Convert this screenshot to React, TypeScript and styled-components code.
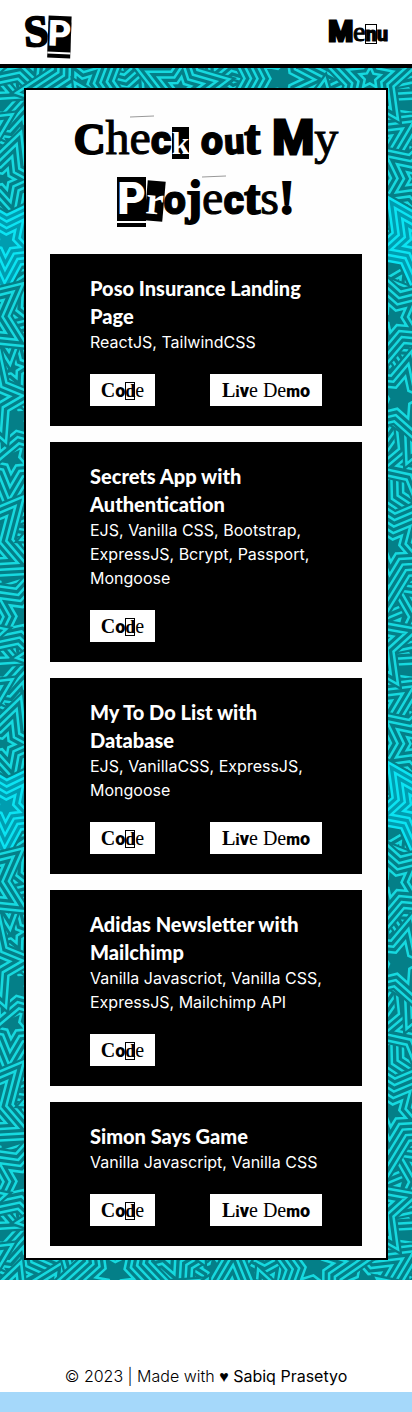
import React from "react";
import styled, { createGlobalStyle, css } from "styled-components";

const GlobalStyle = createGlobalStyle`
  *, *::before, *::after { box-sizing: border-box; }
  body {
    margin: 0;
    background: #a5d8fa;
    color: #000;
    font-family: Inter, sans-serif;
    font-size: 16px;
    line-height: 24px;
  }
  h1, h2, p { margin: 0; }
`;

/* ---------- ransom-note lettering ---------- */

type Face = "serif" | "slab" | "black" | "heavy";
type Glyph = {
  ch: string;
  size: number;
  face: Face;
  cut?: boolean;
  boxed?: boolean;
  underline?: boolean;
  tilt?: number;
  scratch?: boolean;
};

const faces = {
  serif: css`font-family: "Liberation Serif", serif; font-weight: 400; -webkit-text-stroke: 1px currentColor;`,
  slab: css`font-family: "Liberation Serif", serif; font-weight: 700; -webkit-text-stroke: 2px currentColor;`,
  black: css`font-family: Roboto, sans-serif; font-weight: 900; -webkit-text-stroke: 1px currentColor;`,
  heavy: css`font-family: Roboto, sans-serif; font-weight: 700; -webkit-text-stroke: 3px currentColor;`,
};

const Letter = styled.span<{
  $size: number;
  $face: Face;
  $cut?: boolean;
  $boxed?: boolean;
  $underline?: boolean;
  $tilt?: number;
  $scratch?: boolean;
}>`
  position: relative;
  display: inline-block;
  font-size: ${(p) => p.$size}px;
  line-height: 1;
  ${(p) => faces[p.$face]}
  ${(p) => p.$tilt && css`transform: rotate(${p.$tilt}deg);`}
  ${(p) => p.$cut && css`background: #000; color: #fff; -webkit-text-stroke-width: 0;`}
  ${(p) => p.$boxed && css`outline: 1px solid #000; outline-offset: -1px;`}
  ${(p) => p.$underline && css`box-shadow: 0 2px 0 #fff, 0 6px 0 #000;`}
  ${(p) =>
    p.$scratch &&
    css`
      &::before {
        content: "";
        position: absolute;
        top: 2px;
        left: 0;
        width: 24px;
        height: 1px;
        background: #999;
        transform: rotate(-2deg);
      }
    `}
`;

const Word = styled.span`
  display: inline-flex;
  align-items: baseline;
  white-space: nowrap;
`;

const Cutout = ({ glyphs }: { glyphs: Glyph[] }) => (
  <Word>
    {glyphs.map((g, i) => (
      <Letter
        key={i}
        $size={g.size}
        $face={g.face}
        $cut={g.cut}
        $boxed={g.boxed}
        $underline={g.underline}
        $tilt={g.tilt}
        $scratch={g.scratch}
      >
        {g.ch}
      </Letter>
    ))}
  </Word>
);

const words: Record<string, Glyph[]> = {
  logo: [
    { ch: "S", size: 44, face: "slab", tilt: -4 },
    { ch: "P", size: 36, face: "black", cut: true, underline: true, tilt: 2 },
  ],
  menu: [
    { ch: "M", size: 28, face: "heavy" },
    { ch: "e", size: 28, face: "serif" },
    { ch: "n", size: 20, face: "black", boxed: true },
    { ch: "u", size: 20, face: "black" },
  ],
  check: [
    { ch: "C", size: 44, face: "slab" },
    { ch: "h", size: 48, face: "serif" },
    { ch: "e", size: 48, face: "serif", scratch: true },
    { ch: "c", size: 40, face: "black" },
    { ch: "k", size: 32, face: "slab", cut: true },
  ],
  out: [
    { ch: "o", size: 40, face: "black", tilt: 4 },
    { ch: "u", size: 36, face: "black", tilt: -3 },
    { ch: "t", size: 48, face: "slab" },
  ],
  my: [
    { ch: "M", size: 48, face: "heavy" },
    { ch: "y", size: 48, face: "serif" },
  ],
  projects: [
    { ch: "P", size: 44, face: "black", cut: true, underline: true },
    { ch: "r", size: 40, face: "slab", cut: true, tilt: 5 },
    { ch: "o", size: 40, face: "black" },
    { ch: "j", size: 48, face: "slab" },
    { ch: "e", size: 48, face: "serif", scratch: true },
    { ch: "c", size: 40, face: "black" },
    { ch: "t", size: 48, face: "slab" },
    { ch: "s", size: 48, face: "serif" },
    { ch: "!", size: 48, face: "slab" },
  ],
  code: [
    { ch: "C", size: 20, face: "slab" },
    { ch: "o", size: 18, face: "black" },
    { ch: "d", size: 18, face: "slab", boxed: true },
    { ch: "e", size: 20, face: "serif" },
  ],
  live: [
    { ch: "L", size: 20, face: "slab" },
    { ch: "i", size: 16, face: "slab" },
    { ch: "v", size: 18, face: "black" },
    { ch: "e", size: 20, face: "serif" },
  ],
  demo: [
    { ch: "D", size: 20, face: "serif" },
    { ch: "e", size: 20, face: "serif" },
    { ch: "m", size: 16, face: "black" },
    { ch: "o", size: 18, face: "black" },
  ],
};

/* ---------- star wallpaper ---------- */

const TILE_W = 412;
const TILE_H = 565;

const starPoints = (cx: number, cy: number, r: number, turn: number) =>
  Array.from({ length: 10 }, (_, i) => {
    const a = ((turn + i * 36 - 90) * Math.PI) / 180;
    const d = i % 2 ? r * 0.5 : r;
    return `${(cx + d * Math.cos(a)).toFixed(1)},${(cy + d * Math.sin(a)).toFixed(1)}`;
  }).join(" ");

type StarSpec = { x: number; y: number; r: number; turn: number; bright?: boolean };

const scattered: StarSpec[] = Array.from({ length: 88 }, (_, i) => {
  const k = (i * 37) % 88;
  return {
    x: (k % 8) * 52 + ((k * 29) % 31),
    y: Math.floor(k / 8) * 52 + ((k * 17) % 37),
    r: 52 + ((k * 13) % 22),
    turn: (k * 47) % 72,
  };
});

const placed: StarSpec[] = [
  { x: 4, y: 111, r: 50, turn: 20 },
  { x: 14, y: 352, r: 48, turn: 60 },
  { x: 12, y: 300, r: 50, turn: 12 },
  { x: 5, y: 247, r: 50, turn: 30 },
  { x: 6, y: 174, r: 54, turn: 38, bright: true },
  { x: 400, y: 330, r: 48, turn: 14 },
  { x: 394, y: 250, r: 54, turn: 50 },
  { x: 180, y: 20, r: 50, turn: 8 },
  { x: 370, y: 10, r: 50, turn: 2 },
];

const Star = ({ x, y, r, turn, bright }: StarSpec) => {
  const rings: React.ReactNode[] = [];
  for (let d = r; d > 10; d -= 13) {
    rings.push(
      <polygon
        key={d}
        points={starPoints(x, y, d, turn)}
        fill={bright ? "#009db0" : "#047f88"}
        stroke={bright ? "#0be3f2" : "#16d9df"}
        strokeWidth={2.5}
      />
    );
  }
  return (
    <>
      <polygon points={starPoints(x, y, r + 8, turn)} fill="#047f88" />
      {rings}
    </>
  );
};

const WallpaperSvg = styled.svg`
  position: absolute;
  inset: 0;
  width: 100%;
  height: 100%;
`;

const Wallpaper = () => (
  <WallpaperSvg aria-hidden="true">
    <defs>
      <pattern id="stars" width={TILE_W} height={TILE_H} patternUnits="userSpaceOnUse">
        <rect width={TILE_W} height={TILE_H} fill="#047f88" />
        {[...scattered, ...placed].map((s, i) =>
          [-TILE_W, 0, TILE_W].map((dx) =>
            [-TILE_H, 0, TILE_H].map((dy) => {
              const x = s.x + dx;
              const y = s.y + dy;
              const off = x < -80 || x > TILE_W + 80 || y < -80 || y > TILE_H + 80;
              return off ? null : <Star key={`${i}/${dx}/${dy}`} {...s} x={x} y={y} />;
            })
          )
        )}
      </pattern>
    </defs>
    <rect width="100%" height="100%" fill="url(#stars)" />
  </WallpaperSvg>
);

/* ---------- page ---------- */

const Header = styled.header`
  display: flex;
  align-items: center;
  justify-content: space-between;
  height: 68px;
  padding: 0 24px;
  background: #fff;
  border-bottom: 4px solid #000;
`;

const Logo = styled.a`
  color: #000;
  text-decoration: none;
`;

const MenuButton = styled.button`
  padding: 0;
  border: 0;
  background: none;
  color: #000;
  cursor: pointer;
`;

const Main = styled.main`
  position: relative;
  padding: 20px 24px;
`;

const Panel = styled.section`
  position: relative;
  padding: 24px 24px 12px;
  background: #fefefe;
  border: 2px solid #000;
`;

const Title = styled.h1`
  display: flex;
  flex-direction: column;
  align-items: center;
  margin-bottom: 20px;
`;

const TitleRow = styled.span`
  display: flex;
  align-items: baseline;
  justify-content: center;
  gap: 12px;
  height: 60px;
  line-height: 60px;
`;

const Cards = styled.div`
  display: flex;
  flex-direction: column;
  gap: 16px;
`;

const Card = styled.article`
  padding: 20px 40px;
  background: #000;
  color: #fff;
`;

const CardTitle = styled.h2`
  font-family: Lato, sans-serif;
  font-size: 20px;
  font-weight: 900;
  line-height: 28px;
`;

const Actions = styled.div`
  display: flex;
  justify-content: space-between;
  margin-top: 20px;
`;

const Action = styled.a<{ $wide?: boolean }>`
  display: flex;
  align-items: center;
  justify-content: center;
  gap: 5px;
  min-width: ${(p) => (p.$wide ? 112 : 65)}px;
  height: 32px;
  background: #fff;
  color: #000;
  text-decoration: none;

  ${Letter} {
    -webkit-text-stroke-width: 0;
  }
`;

const Footer = styled.footer`
  padding: 84px 24px 4px;
  margin-bottom: 20px;
  background: #fff;
  font-weight: 300;
  text-align: center;
`;

const Heart = styled.span`
  font-family: "Liberation Sans", sans-serif;
  line-height: 1;
`;

const Author = styled.a`
  color: #000;
  font-weight: 400;
  text-decoration: none;
`;

const projects = [
  { title: "Poso Insurance Landing Page", stack: "ReactJS, TailwindCSS", demo: true },
  {
    title: "Secrets App with Authentication",
    stack: "EJS, Vanilla CSS, Bootstrap, ExpressJS, Bcrypt, Passport, Mongoose",
    demo: false,
  },
  { title: "My To Do List with Database", stack: "EJS, VanillaCSS, ExpressJS, Mongoose", demo: true },
  {
    title: "Adidas Newsletter with Mailchimp",
    stack: "Vanilla Javascriot, Vanilla CSS, ExpressJS, Mailchimp API",
    demo: false,
  },
  { title: "Simon Says Game", stack: "Vanilla Javascript, Vanilla CSS", demo: true },
];

export default function App() {
  return (
    <>
      <GlobalStyle />
      <Header>
        <Logo href="#">
          <Cutout glyphs={words.logo} />
        </Logo>
        <MenuButton type="button">
          <Cutout glyphs={words.menu} />
        </MenuButton>
      </Header>
      <Main>
        <Wallpaper />
        <Panel>
          <Title>
            <TitleRow>
              <Cutout glyphs={words.check} />
              <Cutout glyphs={words.out} />
              <Cutout glyphs={words.my} />
            </TitleRow>
            <TitleRow>
              <Cutout glyphs={words.projects} />
            </TitleRow>
          </Title>
          <Cards>
            {projects.map((p) => (
              <Card key={p.title}>
                <CardTitle>{p.title}</CardTitle>
                <p>{p.stack}</p>
                <Actions>
                  <Action href="#">
                    <Cutout glyphs={words.code} />
                  </Action>
                  {p.demo && (
                    <Action href="#" $wide>
                      <Cutout glyphs={words.live} />
                      <Cutout glyphs={words.demo} />
                    </Action>
                  )}
                </Actions>
              </Card>
            ))}
          </Cards>
        </Panel>
      </Main>
      <Footer>
        © 2023 | Made with <Heart>♥</Heart> <Author href="#">Sabiq Prasetyo</Author>
      </Footer>
    </>
  );
}
